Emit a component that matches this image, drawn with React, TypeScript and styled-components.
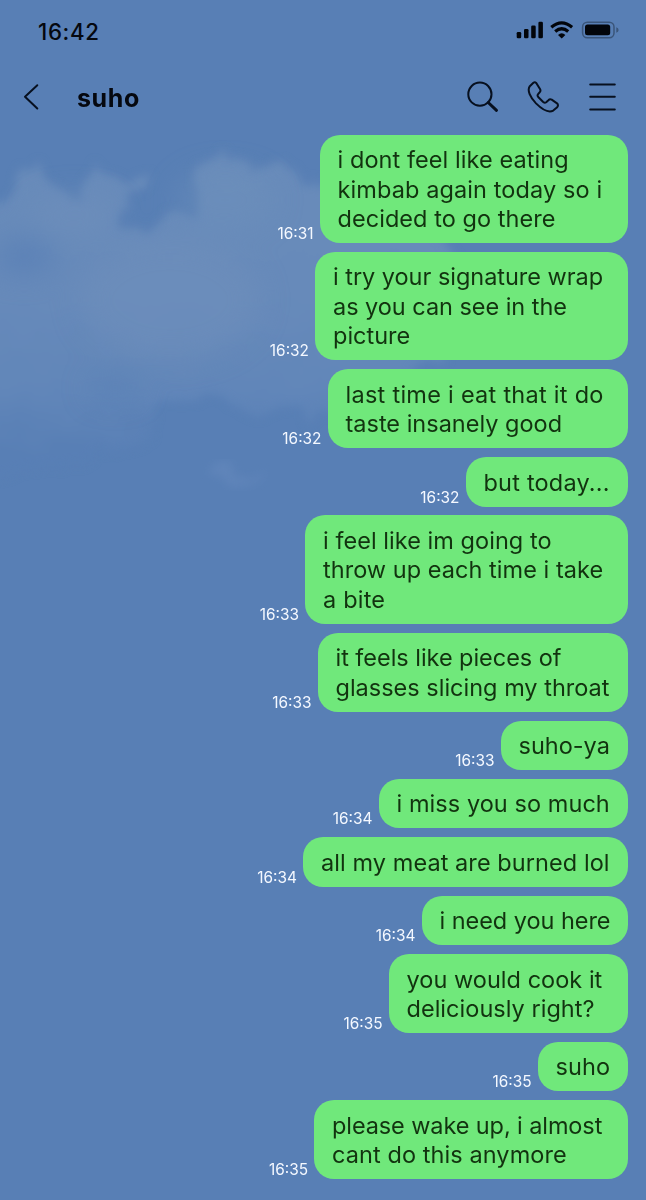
import React from "react";
import styled, { createGlobalStyle } from "styled-components";

const GlobalStyle = createGlobalStyle`
  *, *::before, *::after { box-sizing: border-box; }
  body { margin: 0; background: #587fb5; }
`;

const Screen = styled.main`
  position: relative;
  width: 646px;
  height: 1200px;
  overflow: hidden;
  display: flex;
  flex-direction: column;
  background: #587fb5;
  font-family: Inter, "Liberation Sans", sans-serif;
`;

const Sky = styled.svg`
  position: absolute;
  inset: 0;
`;

const StatusBar = styled.div`
  position: relative;
  display: flex;
  justify-content: space-between;
  align-items: center;
  height: 62px;
  padding: 0 27px 0 38px;
`;

const Clock = styled.span`
  font-size: 22.3px;
  font-weight: 550;
  letter-spacing: 0.65px;
  color: #05080f;
`;

const StatusIcons = styled.div`
  display: flex;
  align-items: center;
  height: 20px;
  margin-top: -2px;
`;

const Header = styled.header`
  position: relative;
  display: flex;
  align-items: center;
  height: 72px;
  padding: 0 25px 0 20px;
`;

const BackButton = styled.button`
  display: flex;
  width: 57px;
  margin-top: -2px;
  padding: 0;
  border: 0;
  background: none;
`;

const Title = styled.h1`
  flex: 1;
  margin: 0;
  font-size: 25px;
  line-height: 30px;
  font-weight: 700;
  letter-spacing: 0.6px;
  color: #05080f;
`;

const Actions = styled.nav`
  display: flex;
  gap: 20px;
  margin-top: -2px;
`;

const Action = styled.button`
  display: flex;
  padding: 0;
  border: 0;
  background: none;
`;

const Messages = styled.section`
  position: relative;
  display: flex;
  flex-direction: column;
  gap: 8.9px;
  padding: 0.7px 18px 0 0;
`;

const Row = styled.div`
  display: flex;
  justify-content: flex-end;
  align-items: flex-end;
  gap: 6px;
`;

const Time = styled.time`
  font-size: 15.4px;
  line-height: 18px;
  color: #f4f8ff;
`;

const Bubble = styled.p<{ $width: number }>`
  width: ${(p) => p.$width}px;
  margin: 0;
  padding: 10.5px 0 9.5px 18px;
  border-radius: 20px;
  background: #70e87b;
  color: #12330f;
  font-size: 23.5px;
  line-height: 29.47px;
  white-space: nowrap;
`;

const Line = styled.span<{ $tracking: number }>`
  display: block;
  letter-spacing: ${(p) => p.$tracking}px;
`;

type Message = { time: string; width: number; lines: [string, number][] };

const messages: Message[] = [
  { time: "16:31", width: 308.5, lines: [["i dont feel like eating", 0.07], ["kimbab again today so i", 0.1], ["decided to go there", 0.05]] },
  { time: "16:32", width: 313, lines: [["i try your signature wrap", -0.03], ["as you can see in the", -0.04], ["picture", 0]] },
  { time: "16:32", width: 300.5, lines: [["last time i eat that it do", 0.27], ["taste insanely good", 0]] },
  { time: "16:32", width: 162.5, lines: [["but today...", 0.2]] },
  { time: "16:33", width: 323, lines: [["i feel like im going to", 0.04], ["throw up each time i take", 0.04], ["a bite", 0.2]] },
  { time: "16:33", width: 310.5, lines: [["it feels like pieces of", -0.04], ["glasses slicing my throat", 0]] },
  { time: "16:33", width: 127.5, lines: [["suho-ya", 0]] },
  { time: "16:34", width: 249.5, lines: [["i miss you so much", 0.06]] },
  { time: "16:34", width: 325, lines: [["all my meat are burned lol", 0.07]] },
  { time: "16:34", width: 206.5, lines: [["i need you here", -0.05]] },
  { time: "16:35", width: 239.5, lines: [["you would cook it", 0.03], ["deliciously right?", 0.03]] },
  { time: "16:35", width: 90.5, lines: [["suho", 0.1]] },
  { time: "16:35", width: 314, lines: [["please wake up, i almost", -0.1], ["cant do this anymore", 0.08]] },
];

const Clouds = () => (
  <Sky width="646" height="1200" viewBox="0 0 646 1200" aria-hidden="true">
    <defs>
      <filter id="wisp" x="-20%" y="-20%" width="140%" height="140%" colorInterpolationFilters="sRGB">
        <feTurbulence type="fractalNoise" baseFrequency="0.03" numOctaves="5" seed="11" result="n" />
        <feDisplacementMap in="SourceGraphic" in2="n" scale="44" xChannelSelector="R" yChannelSelector="G" />
        <feGaussianBlur stdDeviation="5" />
      </filter>
      <filter id="soft" x="-60%" y="-60%" width="220%" height="220%" colorInterpolationFilters="sRGB">
        <feGaussianBlur stdDeviation="14" />
      </filter>
      <linearGradient id="fade" x1="0" y1="150" x2="0" y2="470" gradientUnits="userSpaceOnUse">
        <stop offset="0" stopColor="#698cba" />
        <stop offset="0.45" stopColor="#678aba" />
        <stop offset="0.75" stopColor="#6186b9" />
        <stop offset="0.95" stopColor="#587fb5" />
      </linearGradient>
    </defs>
    <path
      filter="url(#wisp)"
      fill="url(#fade)"
      d="M-30 225L8 200L20 165L36 172L52 186L74 194L92 170L112 178L146 186L122 204L122 226L160 220L198 218L196 164L236 162L280 172L330 190L420 205L450 260L440 350L400 396L310 414L250 415L205 398L165 402L150 440L60 465L-30 480Z"
    />
    <g filter="url(#soft)">
      <ellipse cx="24" cy="256" rx="30" ry="18" fill="#587fb5" opacity="0.75" />
      <ellipse cx="115" cy="388" rx="26" ry="12" fill="#587fb5" opacity="0.55" />
      <ellipse cx="170" cy="300" rx="90" ry="60" fill="#6f90bc" opacity="0.5" />
      <ellipse cx="225" cy="200" rx="50" ry="30" fill="#6f90bc" opacity="0.4" />
      <ellipse cx="75" cy="215" rx="44" ry="20" fill="#6f90bc" opacity="0.5" />
    </g>
    <path filter="url(#wisp)" fill="#6589bd" opacity="0.6" d="M210 474L222 464L260 474L250 486Z" />
  </Sky>
);

const iconStroke = {
  fill: "none",
  stroke: "#07101f",
  strokeWidth: 2,
  strokeLinecap: "round" as const,
  strokeLinejoin: "round" as const,
};

export default function App() {
  return (
    <>
      <GlobalStyle />
      <Screen>
        <Clouds />
        <StatusBar>
          <Clock>16:42</Clock>
          <StatusIcons>
            <svg width="103" height="20" viewBox="516 20 103 20" aria-hidden="true">
              <g fill="#02050a">
                <rect x="516.7" y="32" width="4.5" height="6.3" rx="1.3" />
                <rect x="524" y="29" width="4.5" height="9.3" rx="1.3" />
                <rect x="531.2" y="25.5" width="4.5" height="12.8" rx="1.3" />
                <rect x="538.4" y="21.7" width="4.5" height="16.6" rx="1.3" />
                <path d="M561.7 38.6L558 34.9Q561.7 31.8 565.4 34.9Z" />
              </g>
              <path d="M551.3 27.2Q561.7 18.4 572.1 27.2M555.2 31.5Q561.7 26 568.2 31.5" fill="none" stroke="#02050a" strokeWidth="3.2" />
              <rect x="582.6" y="22.2" width="31.4" height="15.6" rx="4.8" fill="none" stroke="#3a5579" strokeWidth="1.5" />
              <rect x="585" y="24.6" width="25.2" height="10.6" rx="2.5" fill="#02050a" />
              <path d="M616.3 27.3Q618.6 28 618.6 30Q618.6 32 616.3 32.7Z" fill="#3a5579" />
            </svg>
          </StatusIcons>
        </StatusBar>
        <Header>
          <BackButton aria-label="Back">
            <svg width="24" height="32" viewBox="20 81 24 32" {...iconStroke}>
              <path d="M37.3 85.3L25 96.8L37.3 108.5" />
            </svg>
          </BackButton>
          <Title>suho</Title>
          <Actions>
            <Action aria-label="Search">
              <svg width="36" height="36" viewBox="467 79 36 36" {...iconStroke}>
                <circle cx="479.9" cy="94.2" r="11.6" />
                <path d="M488.2 102.5L496.5 110.3" strokeWidth="3" />
              </svg>
            </Action>
            <Action aria-label="Call">
              <svg width="40" height="36" viewBox="523 79 40 36" {...iconStroke}>
                <path d="M533.4 82.8L529.8 86.2C526.8 90.4 530.3 97.5 536 103.4C542.4 109.7 549 113 553.2 110.6L557.2 107.2Q558.8 105 557 103.3L551.7 99.7Q549.8 98.8 548.4 100.2L546.2 102.2Q544.8 103.2 543.2 102L538.2 97Q537 95.5 538.1 94.2L539.8 92.1Q541 90.8 540 89.1L536.4 83.2Q535 81.4 533.4 82.8Z" />
              </svg>
            </Action>
            <Action aria-label="Menu">
              <svg width="38" height="36" viewBox="583 79 38 36" {...iconStroke}>
                <path d="M590.2 84.5H614.8M590.2 96.7H614.8M590.2 109.5H614.8" />
              </svg>
            </Action>
          </Actions>
        </Header>
        <Messages>
          {messages.map((m, i) => (
            <Row key={i}>
              <Time>{m.time}</Time>
              <Bubble $width={m.width}>
                {m.lines.map(([text, tracking]) => (
                  <Line key={text} $tracking={tracking}>{text}</Line>
                ))}
              </Bubble>
            </Row>
          ))}
        </Messages>
      </Screen>
    </>
  );
}
